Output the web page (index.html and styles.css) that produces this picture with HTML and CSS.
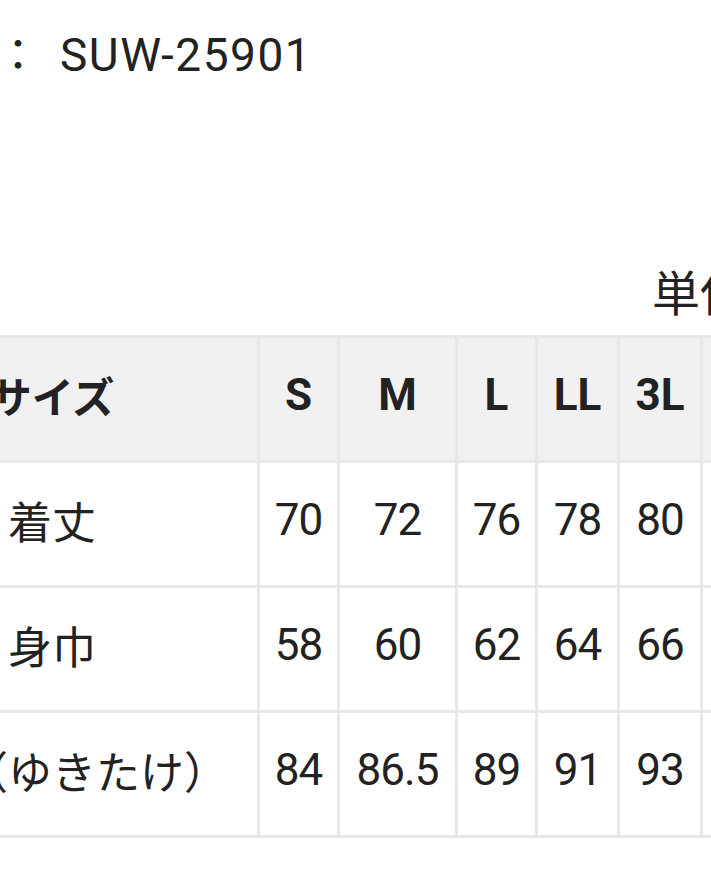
FILE: index.html
```html
<!DOCTYPE html>
<html lang="ja">
<head>
<meta charset="utf-8">
<title>サイズ表</title>
<link rel="stylesheet" href="styles.css">
</head>
<body>
<main class="page">
  <p class="product"><span class="product-label">品番</span><span class="colon">：</span><span class="code">SUW-25901</span></p>
  <p class="unit">単位：cm</p>
  <div class="size-table" role="table">
    <div class="cell head label" role="columnheader">サイズ</div>
    <div class="cell head" role="columnheader">S</div>
    <div class="cell head" role="columnheader">M</div>
    <div class="cell head" role="columnheader">L</div>
    <div class="cell head" role="columnheader">LL</div>
    <div class="cell head" role="columnheader">3L</div>
    <div class="cell head" role="columnheader">4L</div>
    <div class="cell head" role="columnheader">5L</div>

    <div class="cell label" role="rowheader">着丈</div>
    <div class="cell num">70</div>
    <div class="cell num">72</div>
    <div class="cell num">76</div>
    <div class="cell num">78</div>
    <div class="cell num">80</div>
    <div class="cell num">82</div>
    <div class="cell num">84</div>

    <div class="cell label" role="rowheader">身巾</div>
    <div class="cell num">58</div>
    <div class="cell num">60</div>
    <div class="cell num">62</div>
    <div class="cell num">64</div>
    <div class="cell num">66</div>
    <div class="cell num">68</div>
    <div class="cell num">70</div>

    <div class="cell label" role="rowheader">袖丈（ゆきたけ）</div>
    <div class="cell num">84</div>
    <div class="cell num">86.5</div>
    <div class="cell num">89</div>
    <div class="cell num">91</div>
    <div class="cell num">93</div>
    <div class="cell num">95</div>
    <div class="cell num">97</div>
  </div>
</main>
</body>
</html>
```

FILE: styles.css
```css
html, body {
  margin: 0;
  padding: 0;
  background: #ffffff;
  overflow: hidden;
}

body {
  color: #222222;
  font-family: Roboto, "Noto Sans CJK JP", sans-serif;
}

.page {
  margin-left: -156px;
  width: 1025px;
}

.product {
  margin: 0;
  padding: 25px 0 0 64px;
  font-size: 46px;
  line-height: 54px;
  white-space: nowrap;
}

.product-label,
.colon {
  font-family: "Noto Sans CJK JP", sans-serif;
  font-size: 44px;
}

.code {
  margin-left: 20px;
  letter-spacing: 1.5px;
}

.unit {
  margin: 0 0 15px;
  padding: 178px 4px 0 0;
  text-align: right;
  font-family: "Noto Sans CJK JP", sans-serif;
  font-size: 48px;
  line-height: 60px;
  white-space: nowrap;
}

.size-table {
  display: grid;
  grid-template-columns: 410px 77px 115px 77px 79px 80px 80px 80px;
  grid-auto-rows: 122px;
  gap: 3px;
  padding: 3px;
  background: #e7e7e7;
}

.cell {
  background: #ffffff;
  display: flex;
  align-items: center;
  justify-content: center;
  white-space: nowrap;
  padding-bottom: 9px;
  box-sizing: border-box;
}

.label {
  font-family: "Noto Sans CJK JP", sans-serif;
  font-size: 44px;
  font-weight: 400;
}

.num {
  font-family: Roboto, sans-serif;
  font-size: 44px;
  letter-spacing: -1px;
}

.head {
  background: #f1f1f2;
  font-family: Roboto, sans-serif;
  font-weight: 700;
  font-size: 44px;
}

.head.label {
  font-family: "Noto Sans CJK JP", sans-serif;
  font-weight: 700;
  font-size: 42px;
}
```
